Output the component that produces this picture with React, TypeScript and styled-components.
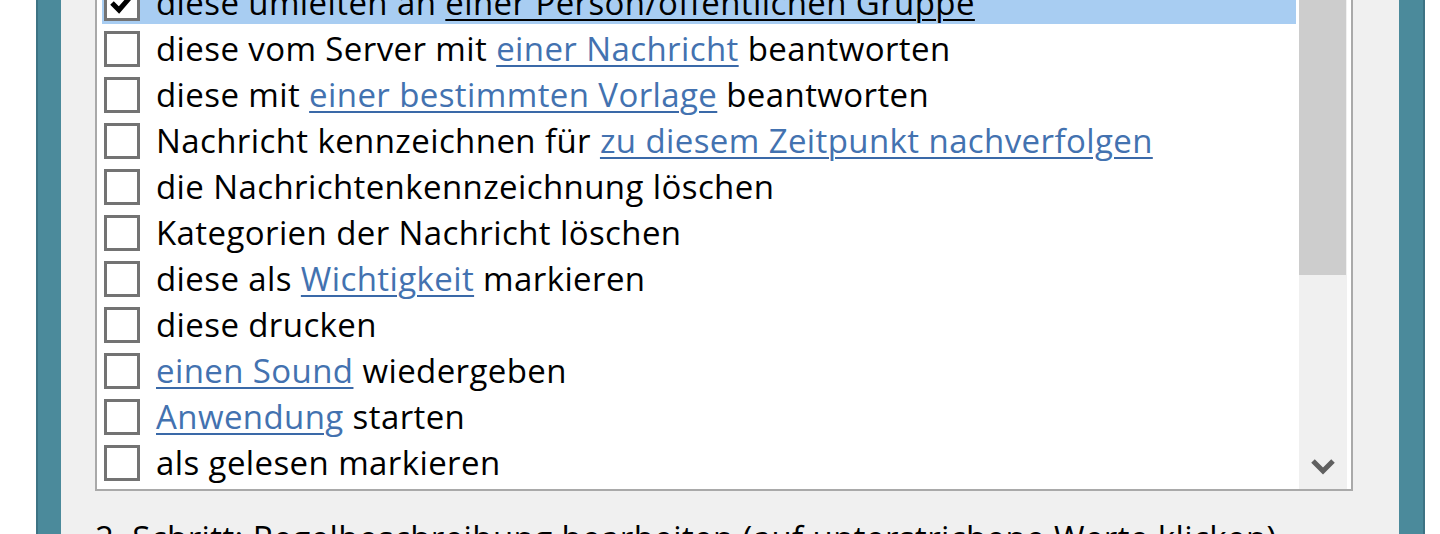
import React from 'react';
import styled, { createGlobalStyle } from 'styled-components';

const GlobalStyle = createGlobalStyle`
  html, body {
    margin: 0;
    padding: 0;
    background: #ffffff;
    overflow: hidden;
  }
  body {
    font-family: "Open Sans", "Noto Sans", sans-serif;
  }
`;

const Screen = styled.div`
  width: 1440px;
  height: 534px;
  overflow: hidden;
  display: flex;
  background: #ffffff;
`;

const WindowFrame = styled.div`
  margin-left: 36px;
  width: 1389px;
  display: flex;
  background: #4b8a9b;
  box-shadow: inset 2px 0 0 #3d7384, inset -2px 0 0 #3d7384;
  padding: 0 26px 0 25px;
  box-sizing: border-box;
`;

const DialogBody = styled.div`
  flex: 1;
  background: #f0f0f0;
  padding-left: 34px;
  padding-right: 46px;
  margin-top: -22px;
  display: flex;
  flex-direction: column;
`;

const ListBox = styled.div`
  display: flex;
  background: #ffffff;
  border: 2px solid #a9a9a9;
  border-top: none;
`;

const Rows = styled.div`
  flex: 1;
  display: flex;
  flex-direction: column;
  padding: 2px 0 3px;
`;

const Row = styled.div<{ $selected?: boolean }>`
  height: 46px;
  display: flex;
  align-items: center;
  gap: 16px;
  margin: 0 3px 0 5px;
  padding-left: 2px;
  font-size: 33px;
  letter-spacing: 0.4px;
  line-height: 46px;
  color: #000000;
  white-space: nowrap;
  background: ${p => (p.$selected ? '#a8cdf2' : 'transparent')};
  box-shadow: ${p => (p.$selected ? 'inset 0 -2px 0 #ffffff' : 'none')};
`;

const CheckBox = styled.span`
  flex: none;
  width: 36px;
  height: 36px;
  box-sizing: border-box;
  border: 3px solid #737373;
  background: #ffffff;
  display: flex;
  align-items: center;
  justify-content: center;
`;

const Label = styled.span`
  display: inline-block;
`;

const Link = styled.span<{ $selected?: boolean }>`
  color: ${p => (p.$selected ? '#000000' : '#4372b0')};
  text-decoration: underline;
  text-decoration-thickness: 2px;
  text-underline-offset: 4px;
  text-decoration-color: ${p => (p.$selected ? '#000000' : '#3a69a8')};
`;

const ScrollBar = styled.div`
  width: 48px;
  flex: none;
  background: #f0f0f0;
  display: flex;
  flex-direction: column;
  margin-right: 4px;
`;

const Thumb = styled.div`
  height: 297px;
  background: #cdcdcd;
  margin-right: 1px;
`;

const Track = styled.div`
  flex: 1;
`;

const ArrowButton = styled.div`
  height: 46px;
  display: flex;
  align-items: center;
  justify-content: center;
`;

const StepLabel = styled.div`
  margin-top: 24px;
  font-size: 33px;
  letter-spacing: 0.4px;
  line-height: 46px;
  color: #000000;
  white-space: nowrap;
`;

type Item = { before?: string; link?: string; after?: string };

const items: Item[] = [
  { before: 'diese umleiten an ', link: 'einer Person/öffentlichen Gruppe' },
  { before: 'diese vom Server mit ', link: 'einer Nachricht', after: ' beantworten' },
  { before: 'diese mit ', link: 'einer bestimmten Vorlage', after: ' beantworten' },
  { before: 'Nachricht kennzeichnen für ', link: 'zu diesem Zeitpunkt nachverfolgen' },
  { before: 'die Nachrichtenkennzeichnung löschen' },
  { before: 'Kategorien der Nachricht löschen' },
  { before: 'diese als ', link: 'Wichtigkeit', after: ' markieren' },
  { before: 'diese drucken' },
  { link: 'einen Sound', after: ' wiedergeben' },
  { link: 'Anwendung', after: ' starten' },
  { before: 'als gelesen markieren' },
];

const CheckMark = () => (
  <svg width="26" height="26" viewBox="0 0 26 26">
    <path d="M3 13 L10 20 L23 5" fill="none" stroke="#000" strokeWidth="5" />
  </svg>
);

const ChevronDown = () => (
  <svg width="24" height="20" viewBox="0 0 24 20">
    <path d="M2 5 L12 15 L22 5" fill="none" stroke="#606060" strokeWidth="5" />
  </svg>
);

const App = () => {
  return (
    <>
      <GlobalStyle />
      <Screen>
        <WindowFrame>
          <DialogBody>
            <ListBox>
              <Rows>
                {items.map((item, i) => {
                  const selected = i === 0;
                  return (
                    <Row key={i} $selected={selected}>
                      <CheckBox>{selected ? <CheckMark /> : null}</CheckBox>
                      <Label>
                        {item.before}
                        {item.link ? <Link $selected={selected}>{item.link}</Link> : null}
                        {item.after}
                      </Label>
                    </Row>
                  );
                })}
              </Rows>
              <ScrollBar>
                <Thumb />
                <Track />
                <ArrowButton>
                  <ChevronDown />
                </ArrowButton>
              </ScrollBar>
            </ListBox>
            <StepLabel>2. Schritt: Regelbeschreibung bearbeiten (auf unterstrichene Werte klicken)</StepLabel>
          </DialogBody>
        </WindowFrame>
      </Screen>
    </>
  );
};

export default App;
